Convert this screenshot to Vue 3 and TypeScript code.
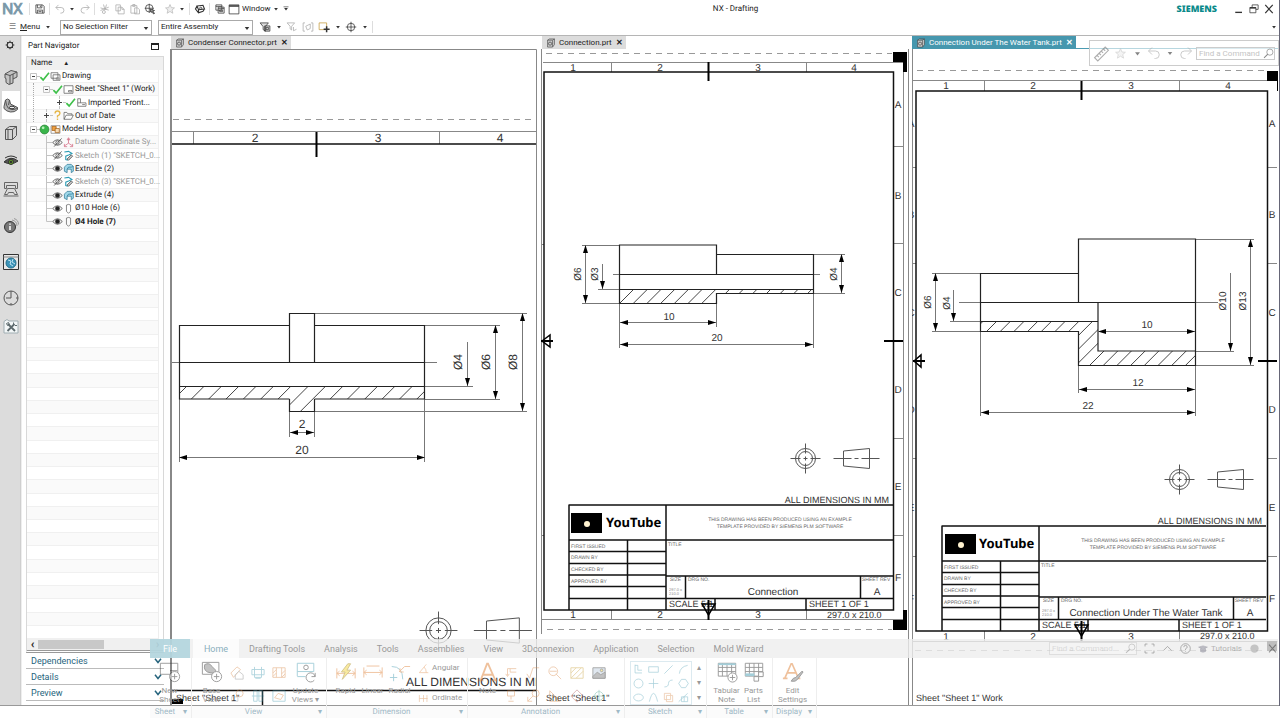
<script setup lang="ts">
interface TreeRow { level: number; toggle: '' | 'plus' | 'minus' | 'leaf' | 'last'; a: string; b: string; label: string; dim?: boolean; bold?: boolean; guide?: boolean }
interface Dim { x1: number; y1: number; x2: number; y2: number; text: string; tx: number; ty: number; single?: boolean }
interface Part { id: string; thin: string; bold: string; hatch: string; c0: number; pitch: number; count: number; top: number; bottom: number; dims: Dim[] }
interface Label { t: string; x: number; y: number }
interface Block { x: number; y: number; name: string; logo: number; word: number }

const arrowDown = '<path d="M5 6.500h6l-3 4z" fill="#333" stroke="none"/>'
const icons: Record<string, string> = {
  save: '<path d="M2.500 2.500h9l2 2v9h-11zM4.500 2.500v4h6v-4M4.500 13.500v-4h7v4M6 11.500h4M8.500 3.500v2"/>',
  undo: '<path d="M6 2.500L2.500 6 6 9.500M2.500 6h7a3.500 3.500 0 0 1 0 7.500h-1" stroke="#aaa"/>',
  redo: '<path d="M10 2.500L13.500 6 10 9.500M13.500 6h-7a3.500 3.500 0 0 0 0 7.500h1" stroke="#aaa"/>',
  cut: '<path d="M2 6.500l11 3M2 10l11-4.500M6 2l2 7M10 2l-2 7" stroke="#aaa"/><circle cx="6.500" cy="12" r="2" stroke="#aaa"/>',
  copy: '<path d="M2.500 2.500h6v8h-6zM5.500 5.500h5l3 3v6h-8zM10.500 5.500v3h3" stroke="#aaa" fill="#fff"/>',
  paste: '<path d="M2.500 3.500h8v10h-8zM5 2h3v2.500H5zM7.500 6.500h4l2.500 2.500v5.500H7.500z" stroke="#aaa" fill="#fff"/>',
  target: '<circle cx="7" cy="7" r="5"/><path d="M7 1v12M1 7h12M8 8l6 2-2 1 2 3-1.500.5-1.500-3-1.500 1z" fill="#999"/>',
  star: '<path d="M8 2l1.800 4.200 4.200.3-3.300 2.800 1.100 4.400L8 11.300l-3.800 2.400 1.100-4.400L2 6.500l4.200-.3z" stroke="#bbb" fill="#eee"/>',
  arrow: arrowDown,
  arrowbar: '<path d="M4 4.500h8"/>' + arrowDown,
  cube: '<path d="M4 4l8-1 2 5-8 1zM4 4L2 8l4 5 6-2 2-3M6 9v4" stroke-width="1.500"/><circle cx="9" cy="7" r="1.500"/>',
  layers: '<path d="M2.500 2.500h8v7h-8zM2.500 4.500h8M5.500 5.500h8v8h-8zM5.500 7.500h8M7.500 9.500h4v2h-4z" fill="#fff"/>',
  window: '<path d="M1.500 2.500h13v12h-13z"/><path d="M1.500 4h13" stroke-width="2"/>',
  filter: '<path d="M1.500 2.500h11l-4 5v6l-3-2v-4zM7.500 6.500h7v7h-7zM9.500 8.500h3v3h-3z" fill="#ddd"/>',
  filter2: '<path d="M1.500 2.500h10l-4 4.500v5l-2-1.500V7zM10 8v5l4-2" stroke="#aaa"/>',
  brackets: '<path d="M4 2.500H1.500v11H4M12 2.500h2.500v11H12M5 7l6-3v6l-4 2z" stroke="#aaa"/>',
  boxplus: '<path d="M1.500 2.500h10v9h-10z" stroke="#c49a3a"/><path d="M11.500 7v8M7.500 11h8" stroke-width="2"/>',
  cross: '<circle cx="8" cy="8" r="5"/><path d="M8 1v14M1 8h14"/>',
  part: '<path d="M2.500 3.500h8l3-2v9l-3 4h-8zM10.500 4v10M2.500 3.500l3-2h8" fill="#ccc" stroke="#444"/><circle cx="6.500" cy="9" r="2.500"/>',
  gear: '<circle cx="8" cy="8" r="4.500" stroke-width="1.800"/><path d="M8 1v3M8 12v3M1 8h3M12 8h3M3 3l2 2M11 11l2 2M3 13l2-2M11 5l2-2" stroke-width="1.500"/>',
  asm: '<path d="M2 5l6-3.500 6 1.500v5l-4 2v4l-4 1.500-3-2V9.500L2 9zM2 5l5 1.500v8.500M7 6.500l7-3.500M10 10V5" fill="#c4c4c4" stroke="#555"/>',
  nav: '<path d="M2.500 3q2-2 4 0l1 4 7 3.500v2q-3 3-7 2.500T1 11.500v-2z" fill="#b4b4b4" stroke="#555"/><path d="M2.500 3l1 5q1 4 5 4.500t6-2M6.500 3l-1 5" stroke="#555"/><ellipse cx="9" cy="10.500" rx="2.500" ry="1.300" fill="#eee"/>',
  reuse: '<path d="M2.500 4.500l4-3h7v9l-4 4h-7zM2.500 4.500h7v10M9.500 4.500l4-3M5 4.500v10" fill="#d4d4d4" stroke="#555"/>',
  eyecol: '<path d="M1 9q7-7 14-1-7 5-14 1z" fill="#555"/><circle cx="8" cy="9" r="2.500" fill="#6fb62c"/><circle cx="8" cy="9" r="1" fill="#111"/><path d="M2 5q6-4 12 0"/>',
  machine: '<path d="M1.500 1.500h13v6h-2v-3h-9v3h-2zM4.500 7.500l-3 6h3l1-2h5l1 2h3l-3-6zM.5 15h15" stroke="#666"/>',
  info: '<circle cx="7" cy="9" r="5.500" fill="#777"/><path d="M7 8v4M7 5.500v1.200" stroke="#fff" stroke-width="1.500"/><path d="M9 2q5 1 5 6M11 .5q4.500 1.500 4.500 6" stroke="#999"/>',
  web: '<path d="M.5.500h15v15H.5z" fill="#e8e8e8"/><path d="M.5 3h15" stroke="#888"/><circle cx="8" cy="9" r="5" fill="#3c93b8" stroke="#23708d"/><path d="M5 6l3 1-1 3 3 2M10 5l-1 3 3 2" stroke="#bfe3f0"/>',
  clock: '<circle cx="8" cy="8" r="7" stroke="#555"/><path d="M8 1v7H3M8 13v2M13 8h2" stroke="#555"/>',
  tools: '<path d="M1 3.500l3-2 2 1.500h9v12H1z" fill="#f3f7f8" stroke="#a0aeb3"/><path d="M5 6l7 7M11.500 6L4.500 13" stroke="#5d6a6e" stroke-width="1.800"/><path d="M3.500 5.500l2-1 1 2-2 1zM10.500 6.500v-2M12 7.500h2" stroke="#5d6a6e"/>',
  check: '<path d="M2 9l4 4L14.500 2.500" stroke="#3fc04a" stroke-width="2.400"/>',
  sheets: '<path d="M1.500 2.500h10v8h-10zM4.500 5.500h10v8h-10z" fill="#fff" stroke="#555"/><path d="M9 10h4v2H9z" stroke="#777"/>',
  sheet: '<path d="M1.500 2.500h13v11h-13zM8 9.500h5v2H8z" fill="#fff" stroke="#555"/>',
  imported: '<path d="M2.500 2.500h4v6h8v5h-12zM2.500 8.500h4M9 11h4" stroke="#555"/>',
  question: '<path d="M4.500 5q0-3.500 3.500-3.500T11.500 5Q11.500 7 8 8.500v2.500M8 12.500v2" stroke="#e6b84b" stroke-width="2"/>',
  folder: '<path d="M1.500 13.500v-10h4l1.500 2h6v2M1.500 13.500l3-6h10.500l-3 6z" fill="#fff" stroke="#555"/>',
  ball: '<circle cx="8" cy="8" r="6.500" fill="#39b54a" stroke="#2a7f36"/><circle cx="6" cy="5.500" r="2" fill="#b7efb9" stroke="none"/>',
  history: '<path d="M1.500 2.500h13v11h-13z" stroke="#777"/><path d="M3 3.500h6v6H3z" fill="#f0a040" stroke="#a05a10"/><path d="M7.500 6.500h6v6h-6z" fill="#f7d9b0" stroke="#a05a10"/>',
  eye: '<path d="M1 8q7-8 14 0-7 8-14 0z" stroke="#333"/><circle cx="8" cy="8" r="3" fill="#222"/>',
  eyeoff: '<path d="M1 8q7-8 14 0-7 8-14 0zM3 14L14 2" stroke="#333"/><circle cx="8" cy="8" r="2.500"/>',
  datum: '<path d="M8 2v7M8 9l-6 4M8 9l6 4M6 4l2-3 2 3zM2 10v4h4M14 10v4h-4" stroke="#d0607a"/>',
  sketch: '<path d="M2 3l6-1 5 3-4 2-5 2v5l3 1" stroke="#2d9db5" stroke-width="1.600"/><path d="M6 13l6-6 2 2-6 6z" fill="#ccc"/>',
  extrude: '<path d="M2 6l4-4h6l3 3v7l-3 2V9H6v5l-4-2z" fill="#9fd8ea" stroke="#23708d"/><path d="M6 9l2-3h4l3-1" stroke="#23708d"/>',
  hole: '<path d="M5 3v9l3 3 3-3V3q-3-2-6 0z" stroke="#555"/>',
  min: '<path d="M3 12.500h9" stroke-width="1.800"/>',
  restore: '<path d="M5.500 5.500v-3h8v6h-3M2.500 6h8v7h-8z"/><path d="M2.500 6.500h8" stroke-width="2"/>',
  close: '<path d="M3 2.500l10 11M13 2.500l-10 11" stroke-width="1.600"/>',
  ruler: '<path d="M1.500 12L11.500 2l3 3L4.500 15zM4 10l1.500 1.500M6 8l1.500 1.500M8 6l1.500 1.500M10 4l1.500 1.500" stroke="#777"/>',
  search: '<circle cx="10" cy="6" r="4.500"/><path d="M7 9l-5.500 5.500" stroke-width="1.500"/>',
  full: '<path d="M1.500 5V1.500H5M11 1.500h3.500V5M14.500 11v3.500H11M5 14.500H1.500V11"/>',
  up: '<path d="M2 11l6-6 6 6"/>',
  help: '<circle cx="8" cy="8" r="7"/><path d="M5.500 6q0-2.500 2.500-2.500T10.500 6Q10.500 7.500 8 8.500v1.500M8 11.500v1"/>',
  cap: '<path d="M1 5l7-2 7 2-7 3zM4 7v5q4 2 8 0V7" fill="#889" stroke="#667"/>',
  dot: '<circle cx="8" cy="8" r="6" fill="#999" stroke="none"/>',
  newsheet: '<path d="M1.500 2.500h19v12h-19zM12 10.500h8"/><circle cx="17" cy="17" r="5.500" fill="#fff"/><path d="M17 14v6M14 17h6"/>',
  baseview: '<path d="M1.500 1.500h18v13h-18z"/><path d="M4 4q5-3 8 2l4 4q0 4-5 3Q2 12 4 4z" fill="#888"/><circle cx="17" cy="17" r="5.500" fill="#fff"/><path d="M17 14v6M14 17h6"/>',
  update: '<path d="M2.500 2.500h18v9h-18zM2.500 16.500v-5M2.500 17h9" stroke="#4a9fb5"/><circle cx="12" cy="7" r="2.500"/><path d="M22 13v4h-4M22 17a5 5 0 1 0-1 4"/>',
  rapid: '<path d="M2 8v11M22 8v11M2 13.500h20M5 11l-3 2.500L5 16M19 11l3 2.500-3 2.500" stroke="#e0843c"/><path d="M14 3l-7 9h4l-3 8 9-10h-4l4-7z" fill="#f5d742" stroke="#a98b20"/>',
  linear: '<path d="M2 7v11M22 7v11M2 12.500h20M5 10l-3 2.500L5 15M19 10l3 2.500-3 2.500M5 5.500h14" stroke="#e0843c"/>',
  radial: '<path d="M3 6q12 0 12 14" stroke="#4a9fb5"/><path d="M11 12l6-6h6M12 8v4h4" stroke="#e0843c"/><path d="M5 14v8M1 18h8" stroke="#4a9fb5"/>',
  note: '<path d="M4 21L11 3h1l8 18M7 15h10M2 21h5M17 21h5" stroke="#e0843c" stroke-width="2"/>',
  edit: '<path d="M3 19L10 3h1l7 16M6 13h9M1 19h5M14 19h6" stroke="#e0843c" stroke-width="1.800"/><path d="M22 11l-7 7q-3 0-5 4 5 1 7-2l6-8z" fill="#888"/>',
  table: '<path d="M2.500 2.500h19v14h-19zM2.500 7h19M2.500 11.500h19M7 2.500v14M12 2.500v14M17 2.500v14"/><path d="M2.500 3.500h19" stroke="#4a9fb5" stroke-width="2"/><circle cx="18" cy="18" r="5" fill="#fff"/><path d="M18 15v6M15 18h6"/>',
  parts: '<path d="M2.500 2.500h19v14h-19zM2.500 7h19M2.500 11.500h19M7 2.500v14M12 2.500v14M17 2.500v14"/><path d="M2.500 15h10" stroke="#4a9fb5" stroke-width="3"/><path d="M12 17h5v5h-5zM17 12h5v5h-5z" fill="#fff"/>',
  v1: '<path d="M1 8l7-7 4 3-8 9z" stroke="#d98a4a"/><path d="M6 10l4-4 5 4v5H6z" stroke="#888"/>',
  v2: '<path d="M1 4h14v6H1zM4 1v12h8V1M5 14h6" stroke="#4a9fb5"/>',
  v3: '<path d="M1 2h14v11H1zM5 2v11M11 2v11M1 8l4-4M1 12l4-4M11 9l4-4M11 13l4-4" stroke="#d98a4a"/>',
  v4: '<path d="M2 9h7v5H2z" stroke="#999"/><circle cx="11" cy="5" r="4" stroke="#d98a4a"/>',
  v5: '<path d="M3 2h4v12H3zM9 2h4v12H9zM1 8h14" stroke="#4a9fb5"/>',
  v6: '<path d="M1 2h14v12H1z" stroke="#4a9fb5"/><path d="M3 10l4-5 6 2-3 5z" stroke="#d98a4a"/>',
  angular: '<path d="M2 14L12 2M2 14h13M9 6q3 3 3 8" stroke="#e0843c"/>',
  ordinate: '<path d="M2 3v10M2 8h12M8 3v10M13 3v10" stroke="#d98a4a"/>',
  a1: '<path d="M14 3H4v8M2 9l2 3 2-3M7 3v4h7" stroke="#d98a4a"/>',
  a2: '<path d="M1 9l3 5 4-12h7" stroke="#d98a4a"/>',
  a3: '<circle cx="6" cy="6" r="5" stroke="#d98a4a"/><path d="M2 6h8M9 9l6 6" stroke="#d98a4a"/>',
  a4: '<path d="M1 2h14v12H1zM1 8l6-6M1 14L13 2M7 14l8-8" stroke="#c9a23a"/>',
  a5: '<path d="M1 2h14v12H1z" fill="#bcd"/><path d="M1 12l5-5 4 3 5-3v7H1z" fill="#777"/><circle cx="11" cy="5" r="1.500" fill="#f5d742"/>',
  a6: '<path d="M4 2h8v6H4zM8 8v4M5 14h6" stroke="#d98a4a"/>',
  a7: '<circle cx="11" cy="5" r="4" stroke="#d98a4a"/><path d="M8 8l-6 6M2 9v5h5" stroke="#d98a4a"/>',
  a8: '<path d="M2 2v12h12zM5 7l6 6" stroke="#d98a4a"/>',
  a9: '<path d="M8 1l7 7-7 7-7-7z" stroke="#a55"/>',
  a10: '<circle cx="8" cy="8" r="5" stroke="#5a9"/><path d="M8 1v14M1 8h14" stroke="#5a9"/>',
  s1: '<path d="M3 1v12h10M3 2h4v7h6"/>', s2: '<path d="M1 4h14v8H1z"/>', s3: '<path d="M2 14L14 2"/>', s4: '<path d="M2 14Q3 4 14 2"/>',
  s5: '<circle cx="8" cy="8" r="6.500"/>', s6: '<path d="M8 1v14M1 8h14"/>', s7: '<path d="M2 13q6 0 6-5t6-5"/>', s8: '<path d="M5 2h6l4 6-4 6H5L1 8z"/>',
  s9: '<ellipse cx="8" cy="8" rx="7" ry="5"/>', s10: '<path d="M2 14Q8-10 14 14"/>', s11: '<path d="M2 2h9v3h3v9H5v-3H2zM5 5h6v6H5z" stroke="#d98a4a"/>', s12: '<path d="M1 14L14 2M5 7h9v7H5zM9 7v7"/>',
}

const quickA = ['cut', 'copy', 'paste', 'target']
const rail = [
  { i: 'asm', n: 'Assembly Navigator', c: '' }, { i: 'nav', n: 'Part Navigator', c: 'on' }, { i: 'reuse', n: 'Reuse Library', c: '' },
  { i: 'eyecol', n: 'View Manager', c: '' }, { i: 'machine', n: 'Machining', c: '' }, { i: 'info', n: 'Information', c: 'tall' },
  { i: 'web', n: 'Web Browser', c: 'tall' }, { i: 'clock', n: 'History', c: 'tall' }, { i: 'tools', n: 'Roles', c: 'short' },
]
const tree: TreeRow[] = [
  { level: 0, toggle: 'minus', a: 'check', b: 'sheets', label: 'Drawing' },
  { level: 1, toggle: 'minus', a: 'check', b: 'sheet', label: 'Sheet "Sheet 1" (Work)', guide: true },
  { level: 2, toggle: 'plus', a: 'check', b: 'imported', label: 'Imported "Front...', guide: true },
  { level: 1, toggle: 'plus', a: 'question', b: 'folder', label: 'Out of Date', guide: true },
  { level: 0, toggle: 'minus', a: 'ball', b: 'history', label: 'Model History' },
  { level: 1, toggle: 'leaf', a: 'eyeoff', b: 'datum', label: 'Datum Coordinate Sy...', dim: true },
  { level: 1, toggle: 'leaf', a: 'eyeoff', b: 'sketch', label: 'Sketch (1) "SKETCH_0...', dim: true },
  { level: 1, toggle: 'leaf', a: 'eye', b: 'extrude', label: 'Extrude (2)' },
  { level: 1, toggle: 'leaf', a: 'eyeoff', b: 'sketch', label: 'Sketch (3) "SKETCH_0...', dim: true },
  { level: 1, toggle: 'leaf', a: 'eye', b: 'extrude', label: 'Extrude (4)' },
  { level: 1, toggle: 'leaf', a: 'eye', b: 'hole', label: 'Ø10 Hole (6)' },
  { level: 1, toggle: 'last', a: 'eye', b: 'hole', label: 'Ø4 Hole (7)', bold: true },
]
const toggles: Record<string, string> = {
  plus: 'M6.500 0v3M6.500 10v3M10 6.500h3',
  minus: 'M3.500 3.500h6v6h-6zM10 6.500h3',
  leaf: 'M6.500 0v14M6.500 6.500h6', last: 'M6.500 0v6.500h6', '': '',
}
const marks: Record<string, string> = { plus: 'M4 6.500h5M6.500 4v5', minus: 'M5 6.500h3', leaf: '', last: '', '': '' }
const emptyRows = 43 - tree.length
const sections = ['Dependencies', 'Details', 'Preview']
const ribbonTabs = ['Drafting Tools', 'Analysis', 'Tools', 'Assemblies', 'View', '3Dconnexion', 'Application', 'Selection', 'Mold Wizard']
const viewIcons = ['v1', 'v2', 'v3', 'v4', 'v5', 'v6']
const noteIcons = ['a1', 'a2', 'a3', 'a4', 'a5', 'a6', 'a7', 'a8', 'a9', 'a10']
const sketchIcons = Array.from({ length: 12 }, (_, i) => `s${i + 1}`)

const condenser: Part = {
  id: 'condenser',
  bold: 'M289.500 325.500H179.500V399H289.500M314.500 325.500H424.500V399H314.500M289.500 362V313.500H314.500V362M179.500 386.500H424.500M289.500 399V411.500H314.500V399M179.500 362.500H424.500',
  thin: 'M172 362.500H437M314 313.500H527M424 325.500H500M424 386.500H473M424 399.500H500M314 411.500H527M179.500 399V462M424.500 399V462M289.500 411V437M314.500 411V437',
  hatch: '179.500,386.500 424.500,386.500 424.500,399 314.500,399 314.500,411.500 289.500,411.500 289.500,399 179.500,399',
  c0: 573, pitch: 17.35, count: 16, top: 380, bottom: 415,
  dims: [
    { x1: 179, y1: 457.5, x2: 425, y2: 457.5, text: '20', tx: 302, ty: 454 },
    { x1: 290, y1: 432.5, x2: 314, y2: 432.5, text: '2', tx: 302, ty: 428 },
    { x1: 467.5, y1: 342, x2: 467.5, y2: 386, text: 'Ø4', tx: 462, ty: 362, single: true },
    { x1: 495.5, y1: 325, x2: 495.5, y2: 399, text: 'Ø6', tx: 490, ty: 362 },
    { x1: 522.5, y1: 313, x2: 522.5, y2: 411, text: 'Ø8', tx: 517, ty: 362 },
  ],
}
const connection: Part = {
  id: 'connection',
  bold: 'M716.500 274V245H619.500V303.500H716.500V293.500H813.500V254.500H716.500M619.500 274.500H813.500M619.500 289.500H813.500',
  thin: 'M613 274.500H820M582 245.500H619M582 303.500H619M598 289.500H619M813 254.500H845M813 293.500H845M619.500 303V348M716.500 303V327M813.500 293V348',
  hatch: '619.500,289.500 813.500,289.500 813.500,293.500 716.500,293.500 716.500,303.500 619.500,303.500',
  c0: 923, pitch: 13.7, count: 16, top: 285, bottom: 308,
  dims: [
    { x1: 585.5, y1: 245, x2: 585.5, y2: 303, text: 'Ø6', tx: 581, ty: 274 },
    { x1: 602.5, y1: 264, x2: 602.5, y2: 289, text: 'Ø3', tx: 598, ty: 274, single: true },
    { x1: 841.5, y1: 254, x2: 841.5, y2: 293, text: 'Ø4', tx: 837, ty: 274 },
    { x1: 620, y1: 322.5, x2: 716, y2: 322.5, text: '10', tx: 669, ty: 320 },
    { x1: 620, y1: 344.5, x2: 813, y2: 344.5, text: '20', tx: 717, ty: 341 },
  ],
}
const tank: Part = {
  id: 'tank',
  bold: 'M1078.500 273.500H980.500V331.500H1078.500V365.500H1195.500V239H1078.500V302M980.500 321.500H1098V351H1195.500M1098 351V302.500M980.500 302.500H1195.500',
  thin: 'M959 302.500H1218M932 273.500H980M932 331.500H980M950 321.500H980M1195 239.500H1254M1195 351.500H1234M1195 365.500H1254M980.500 331V416M1078.500 365V393M1195.500 365V416',
  hatch: '980.500,321.500 1098,321.500 1098,351 1195.500,351 1195.500,365.500 1078.500,365.500 1078.500,331.500 980.500,331.500',
  c0: 1318, pitch: 13.7, count: 20, top: 318, bottom: 369,
  dims: [
    { x1: 935.5, y1: 273, x2: 935.5, y2: 331, text: 'Ø6', tx: 931, ty: 302 },
    { x1: 953.5, y1: 290, x2: 953.5, y2: 321, text: 'Ø4', tx: 950, ty: 303, single: true },
    { x1: 1230.5, y1: 273, x2: 1230.5, y2: 351, text: 'Ø10', tx: 1226, ty: 301, single: true },
    { x1: 1250.5, y1: 239, x2: 1250.5, y2: 365, text: 'Ø13', tx: 1246, ty: 301 },
    { x1: 1098, y1: 331.5, x2: 1195, y2: 331.5, text: '10', tx: 1147, ty: 328 },
    { x1: 1079, y1: 389.5, x2: 1195, y2: 389.5, text: '12', tx: 1138, ty: 386 },
    { x1: 981, y1: 412.5, x2: 1195, y2: 412.5, text: '22', tx: 1088, ty: 409 },
  ],
}

function isVertical(d: Dim): boolean { return d.x1 === d.x2 }
function tip(x: number, y: number, dx: number, dy: number): string {
  return `M${x} ${y}L${x + dx * 8 + dy * 2.5} ${y + dy * 8 + dx * 2.5}L${x + dx * 8 - dy * 2.5} ${y + dy * 8 - dx * 2.5}Z`
}
function tips(d: Dim): string {
  if (isVertical(d)) return (d.single ? '' : tip(d.x1, d.y1, 0, 1)) + tip(d.x2, d.y2, 0, -1)
  return tip(d.x1, d.y1, 1, 0) + tip(d.x2, d.y2, -1, 0)
}
function hatching(p: Part): string {
  return Array.from({ length: p.count + 2 }, (_, k) => {
    const c = p.c0 + (k - 1) * p.pitch
    return `M${c - p.top} ${p.top}L${c - p.bottom} ${p.bottom}`
  }).join('')
}
const blockLines = 'M569 505H893M569 540H893M569 551.500H666M569 563.500H666M569 575H666M569 586.500H666M569 598.500H893M666 576H893M569 504.500V610M666 505V610M627.500 540V610M685.500 576V598M860.500 576V598M715 598V610M806 598V610'
const small: Label[] = [
  { t: 'FIRST ISSUED', x: 571, y: 548 }, { t: 'DRAWN BY', x: 571, y: 559 }, { t: 'CHECKED BY', x: 571, y: 571 }, { t: 'APPROVED BY', x: 571, y: 583 },
  { t: 'TITLE', x: 668, y: 546 }, { t: 'SIZE', x: 670, y: 581 }, { t: 'DRG NO.', x: 688, y: 581 }, { t: 'SHEET REV', x: 862, y: 581 },
]
const sheets: { part: Part; vb: string; frame: string; heavy: string; grid: string; tris: string; corner: string; dash: string; labels: Label[]; block: Block; sym: [number, number]; cls: string }[] = [
  {
    part: connection, vb: '541 49 371 656', cls: 'mid',
    frame: 'M544 72H893.500V610H544Z',
    heavy: 'M708.500 62V81M884 341H903M541 341H553M708.500 600V620',
    grid: 'M543 62.500H903.500V619.500H541.500M541.500 49V634M908.500 49V705M611.500 62V72M806.500 62V72M611.500 610V620M806.500 610V620M893 146.500h10M893 243.500h10M893 438.500h10M893 535.500h10M541 244.500h3M541 535.500h3',
    tris: 'M542 341L550 335V347ZM702 604H715L708.500 615Z',
    corner: 'M893 52H907V72H903V62H893ZM893 620H903V610H907V630H893Z',
    dash: 'M546 53.500H892M547 629.500H892',
    labels: [
      { t: '1', x: 573, y: 71 }, { t: '2', x: 660, y: 71 }, { t: '3', x: 758, y: 71 }, { t: '4', x: 854, y: 71 },
      { t: '1', x: 573, y: 618 }, { t: '2', x: 660, y: 618 }, { t: '3', x: 758, y: 618 },
      { t: 'A', x: 898, y: 108 }, { t: 'B', x: 898, y: 199 }, { t: 'C', x: 898, y: 296 }, { t: 'D', x: 898, y: 393 }, { t: 'E', x: 898, y: 490 }, { t: 'F', x: 898, y: 581 },
    ],
    block: { x: 0, y: 0, name: 'Connection', logo: 571, word: 606 }, sym: [805.5, 458.5],
  },
  {
    part: tank, vb: '912 49 368 656', cls: 'right',
    frame: 'M916 91H1267.500V631H916Z',
    heavy: 'M1081.500 81V100M1258 361H1277M913 361H925M1081.500 621V641',
    grid: 'M913 80.500H1277.500M912.500 641.500H1277.500M912.500 49V705M984.500 80V91M1179.500 80V91M984.500 631V641M1179.500 631V641M1267 167.500h10M1267 263.500h10M1267 458.500h10M1267 556.500h10M912 167.500h4M912 263.500h4M912 458.500h4M912 556.500h4',
    tris: 'M914 361L921 355V367ZM1075 625H1088L1081.500 636Z',
    corner: 'M1267 71H1278V91H1277V81H1267ZM1267 641H1277V651H1267Z',
    dash: 'M917 70.500H1266M915 650.500H1266',
    labels: [
      { t: '1', x: 946, y: 89 }, { t: '2', x: 1033, y: 89 }, { t: '3', x: 1131, y: 89 }, { t: '4', x: 1228, y: 89 },
      { t: '1', x: 946, y: 640 }, { t: '2', x: 1033, y: 640 }, { t: '3', x: 1131, y: 640 },
      { t: 'A', x: 1272, y: 127 }, { t: 'B', x: 1272, y: 218 }, { t: 'C', x: 1272, y: 316 }, { t: 'D', x: 1272, y: 413 }, { t: 'E', x: 1272, y: 511 }, { t: 'F', x: 1272, y: 602 },
      { t: 'A', x: 911, y: 127 }, { t: 'B', x: 911, y: 218 }, { t: 'C', x: 911, y: 316 }, { t: 'D', x: 911, y: 413 }, { t: 'E', x: 911, y: 511 }, { t: 'F', x: 911, y: 602 },
    ],
    block: { x: 373, y: 21, name: 'Connection Under The Water Tank', logo: 572, word: 606 }, sym: [1179.5, 479.5],
  },
]
</script>

<template>
  <div class="app">
    <header class="top">
      <div class="bar first">
        <span class="nx">NX</span><i class="sep" />
        <button class="ic" aria-label="Save"><svg viewBox="0 0 16 16" v-html="icons.save" /></button><i class="sep" />
        <button class="ic" aria-label="Undo"><svg viewBox="0 0 16 16" v-html="icons.undo" /></button>
        <button class="ic thin" aria-label="Undo list"><svg viewBox="0 0 16 16" v-html="icons.arrow" /></button>
        <button class="ic" aria-label="Redo"><svg viewBox="0 0 16 16" v-html="icons.redo" /></button><i class="sep" />
        <button v-for="q in quickA" :key="q" class="ic" :aria-label="q"><svg viewBox="0 0 16 16" v-html="icons[q]" /></button><i class="sep plain" />
        <button class="ic" aria-label="Favorites"><svg viewBox="0 0 16 16" v-html="icons.star" /></button>
        <button class="ic thin" aria-label="Favorites list"><svg viewBox="0 0 16 16" v-html="icons.arrow" /></button><i class="sep" />
        <button class="ic" aria-label="Touch mode"><svg viewBox="0 0 16 16" v-html="icons.cube" /></button><i class="sep" />
        <button class="ic" aria-label="Switch window"><svg viewBox="0 0 16 16" v-html="icons.layers" /></button>
        <button class="ic word" aria-label="Window"><svg viewBox="0 0 16 16" v-html="icons.window" />Window</button>
        <button class="ic thin" aria-label="Window list"><svg viewBox="0 0 16 16" v-html="icons.arrow" /></button>
        <button class="ic thin" aria-label="Customize"><svg viewBox="0 0 16 16" v-html="icons.arrowbar" /></button>
        <h1 class="title">NX - Drafting</h1>
        <strong class="brand">SIEMENS</strong>
        <button v-for="w in ['min', 'restore', 'close']" :key="w" class="ic" :aria-label="w"><svg viewBox="0 0 16 16" v-html="icons[w]" /></button>
      </div>
      <div class="bar second">
        <button class="menu"><span class="burger">☰</span><span><u>M</u>enu</span><svg class="tiny" viewBox="0 0 16 16" v-html="icons.arrow" /></button>
        <label class="pick"><select aria-label="Selection filter"><option>No Selection Filter</option></select><svg viewBox="0 0 16 16" v-html="icons.arrow" /></label>
        <label class="pick"><select aria-label="Selection scope"><option>Entire Assembly</option></select><svg viewBox="0 0 16 16" v-html="icons.arrow" /></label>
        <button class="ic" aria-label="Filter"><svg viewBox="0 0 16 16" v-html="icons.filter" /></button>
        <button class="ic thin" aria-label="Filter list"><svg viewBox="0 0 16 16" v-html="icons.arrow" /></button>
        <button class="ic" aria-label="Reset filters"><svg viewBox="0 0 16 16" v-html="icons.filter2" /></button>
        <button class="ic" aria-label="Deselect"><svg viewBox="0 0 16 16" v-html="icons.brackets" /></button>
        <button class="ic" aria-label="Add"><svg viewBox="0 0 16 16" v-html="icons.boxplus" /></button>
        <button class="ic thin" aria-label="Add list"><svg viewBox="0 0 16 16" v-html="icons.arrow" /></button>
        <button class="ic" aria-label="Snap"><svg viewBox="0 0 16 16" v-html="icons.cross" /></button>
        <button class="ic thin" aria-label="Snap list"><svg viewBox="0 0 16 16" v-html="icons.arrow" /></button><i class="sep" />
        <button class="ic thin end" aria-label="More"><svg viewBox="0 0 16 16" v-html="icons.arrow" /></button>
      </div>
    </header>

    <main class="main">
      <nav class="rail">
        <button class="gear" aria-label="Settings"><svg viewBox="0 0 16 16" v-html="icons.gear" /></button>
        <button v-for="r in rail" :key="r.n" :class="r.c" :aria-label="r.n"><svg viewBox="0 0 16 16" v-html="icons[r.i]" /></button>
      </nav>
      <aside class="nav">
        <div class="navtitle"><h2>Part Navigator</h2><button class="maxi" aria-label="Maximize" /></div>
        <div class="box">
          <div class="colhead">Name <span>▲</span></div>
          <ul class="tree">
            <li v-for="r in tree" :key="r.label" :class="{ dim: r.dim, bold: r.bold }">
              <i v-for="n in r.level" :key="n" class="indent" :class="{ line: r.guide }" />
              <svg class="tog" viewBox="0 0 13 13"><path class="dots" :d="toggles[r.toggle]" /><path class="mark" :d="marks[r.toggle]" /></svg>
              <svg class="ti" viewBox="0 0 16 16" v-html="icons[r.a]" />
              <svg class="ti" viewBox="0 0 16 16" v-html="icons[r.b]" />
              <span>{{ r.label }}</span>
            </li>
            <li v-for="n in emptyRows" :key="n" />
          </ul>
          <div class="hscroll"><span>‹</span><i /><span>›</span></div>
        </div>
        <button v-for="s in sections" :key="s" class="section">{{ s }}<svg viewBox="0 0 10 8"><path d="M1 1l4 5 4-5" /></svg></button>
      </aside>

      <section class="views">
        <article class="view left">
          <div class="tabs"><button class="tab"><svg viewBox="0 0 16 16" v-html="icons.part" />Condenser Connector.prt<b>✕</b></button></div>
          <svg class="canvas" viewBox="170 49 371 656" preserveAspectRatio="xMinYMin meet">
            <path class="edge" d="M171 49V705" />
            <path class="grid" d="M172 49.500H536.500V705M541.500 49V705M172 131.500H536M193.500 132V144M439.500 132V144" />
            <path class="dash" d="M173 119.500H536" />
            <path class="frame" d="M172 144H536M172 690.500H536M262.500 690V705" />
            <path class="heavy" d="M316.500 132V157" />
            <path class="solid" d="M172 699H183V704H172Z" />
            <g class="mid12"><text x="255" y="142">2</text><text x="378" y="142">3</text><text x="500" y="142">4</text></g>
            <clipPath id="leftsheet"><path d="M172 49H536V705H172Z" /></clipPath>
            <text class="t12" x="406" y="686" clip-path="url(#leftsheet)">ALL DIMENSIONS IN MM</text>
            <g class="sym" transform="translate(438.500 630.500) scale(1.263)">
              <circle r="10" /><circle r="7" /><path d="M-15 0H-5M-2 0H2M5 0H15M0-15V-5M0-2V2M0 5V15M38-7.500L64-10V10L38 7.500ZM28 0H46M49 0H53M56 0H74" />
            </g>
            <g>
              <clipPath id="clip-condenser"><polygon :points="condenser.hatch" /></clipPath>
              <path class="hatch" clip-path="url(#clip-condenser)" :d="hatching(condenser)" />
              <path class="thin" :d="condenser.thin" /><path class="outline" :d="condenser.bold" />
              <g v-for="d in condenser.dims" :key="d.text">
                <line class="thin" :x1="d.x1" :y1="d.y1" :x2="d.x2" :y2="d.y2" /><path class="solid" :d="tips(d)" />
                <text class="mid12" :x="d.tx" :y="d.ty" :transform="isVertical(d) ? `rotate(-90 ${d.tx} ${d.ty})` : undefined">{{ d.text }}</text>
              </g>
            </g>
            <text class="status" x="176" y="701">Sheet "Sheet 1"</text>
          </svg>
        </article>

        <article v-for="s in sheets" :key="s.cls" class="view" :class="s.cls">
          <div class="tabs"><button class="tab"><svg viewBox="0 0 16 16" v-html="icons.part" />{{ s.block.name }}.prt<b>✕</b></button></div>
          <svg class="canvas" :viewBox="s.vb" preserveAspectRatio="xMinYMin meet">
            <path class="grid" :d="s.grid" /><path class="dash" :d="s.dash" />
            <path class="frame" :d="s.frame" /><path class="solid" :d="s.corner" />
            <g class="mid10"><text v-for="(l, k) in s.labels" :key="k" :x="l.x" :y="l.y">{{ l.t }}</text></g>
            <g class="sym" :transform="`translate(${s.sym[0]} ${s.sym[1]})`">
              <circle r="10" /><circle r="7" /><path d="M-15 0H-5M-2 0H2M5 0H15M0-15V-5M0-2V2M0 5V15M38-7.500L64-10V10L38 7.500ZM28 0H46M49 0H53M56 0H74" />
            </g>
            <g :transform="`translate(${s.block.x} ${s.block.y})`">
              <path class="frame" :d="blockLines" />
              <rect class="solid" :x="s.block.logo" y="513" width="31" height="20" /><circle class="moon" :cx="s.block.logo + 16" cy="524" r="3" />
              <text class="yt" :x="s.block.word" y="527">YouTube</text>
              <text class="t9" x="889" y="503" text-anchor="end">ALL DIMENSIONS IN MM</text>
              <g class="t5"><text v-for="l in small" :key="l.t" :x="l.x" :y="l.y">{{ l.t }}</text></g>
              <g class="t5 center"><text x="780" y="521">THIS DRAWING HAS BEEN PRODUCED USING AN EXAMPLE</text><text x="780" y="528">TEMPLATE PROVIDED BY SIEMENS PLM SOFTWARE</text></g>
              <g class="stamp"><text x="669" y="591">297.0 x</text><text x="669" y="595">210.0</text></g>
              <text class="mid10" x="773" y="595">{{ s.block.name }}</text><text class="mid10" x="877" y="595">A</text>
              <text class="t9" x="669" y="607">SCALE 5:1</text><text class="t9" x="809" y="607">SHEET 1 OF 1</text><text class="t9" x="827" y="618">297.0 x 210.0</text>
            </g>
            <path class="heavy" :d="s.heavy" /><path class="tri" :d="s.tris" />
            <g>
              <clipPath :id="`clip-${s.part.id}`"><polygon :points="s.part.hatch" /></clipPath>
              <path class="hatch" :clip-path="`url(#clip-${s.part.id})`" :d="hatching(s.part)" />
              <path class="thin" :d="s.part.thin" /><path class="outline" :d="s.part.bold" />
              <g v-for="d in s.part.dims" :key="d.text">
                <line class="thin" :x1="d.x1" :y1="d.y1" :x2="d.x2" :y2="d.y2" /><path class="solid" :d="tips(d)" />
                <text class="mid10" :x="d.tx" :y="d.ty" :transform="isVertical(d) ? `rotate(-90 ${d.tx} ${d.ty})` : undefined">{{ d.text }}</text>
              </g>
            </g>
            <text v-if="s.cls === 'mid'" class="status" x="546" y="701">Sheet "Sheet 1"</text>
            <text v-else class="status" x="916" y="701">Sheet "Sheet 1" Work</text>
          </svg>
        </article>
      </section>
    </main>

    <div class="ghostbar">
      <svg class="g18" viewBox="0 0 16 16" v-html="icons.ruler" />
      <svg class="g14" viewBox="0 0 16 16" v-html="icons.star" /><svg class="g14" viewBox="0 0 16 16" v-html="icons.arrow" />
      <svg class="g16" viewBox="0 0 16 16" v-html="icons.undo" /><svg class="g12" viewBox="0 0 16 16" v-html="icons.arrow" />
      <svg class="g16" viewBox="0 0 16 16" v-html="icons.redo" />
      <label class="find"><input type="text" placeholder="Find a Command" aria-label="Find a Command"><svg viewBox="0 0 16 16" v-html="icons.search" /></label>
    </div>

    <div class="ribbon">
      <div class="rtabs">
        <button class="file">File</button><button class="home">Home</button>
        <button v-for="t in ribbonTabs" :key="t">{{ t }}</button>
        <div class="rend">
          <label class="find"><input type="text" placeholder="Find a Command" aria-label="Find a Command in ribbon"><svg viewBox="0 0 16 16" v-html="icons.search" /></label>
          <svg viewBox="0 0 16 16" v-html="icons.full" /><svg viewBox="0 0 16 16" v-html="icons.up" /><svg viewBox="0 0 16 16" v-html="icons.help" />
          <button class="tut"><svg viewBox="0 0 16 16" v-html="icons.cap" />Tutorials</button>
          <svg viewBox="0 0 16 16" v-html="icons.dot" /><svg viewBox="0 0 16 16" v-html="icons.close" />
        </div>
      </div>
      <div class="groups">
        <section class="grp g-sheet">
          <div class="body"><button class="big"><svg viewBox="0 0 24 24" v-html="icons.newsheet" />New<br>Sheet</button></div>
          <footer>Sheet<i>▾</i></footer>
        </section>
        <section class="grp g-view">
          <div class="body">
            <button class="big"><svg viewBox="0 0 24 24" v-html="icons.baseview" />Base<br>View</button>
            <div class="icons three"><button v-for="i in viewIcons" :key="i" :aria-label="i"><svg viewBox="0 0 16 16" v-html="icons[i]" /></button></div>
            <button class="big"><svg viewBox="0 0 24 24" v-html="icons.update" />Update<br>Views ▾</button>
          </div>
          <footer>View<i>▾</i></footer>
        </section>
        <section class="grp g-dim">
          <div class="body">
            <button class="big slim"><svg viewBox="0 0 24 24" v-html="icons.rapid" />Rapid</button>
            <button class="big slim"><svg viewBox="0 0 24 24" v-html="icons.linear" />Linear</button>
            <button class="big slim"><svg viewBox="0 0 24 24" v-html="icons.radial" />Radial</button>
            <div class="stack"><button><svg viewBox="0 0 16 16" v-html="icons.angular" />Angular</button><button><svg viewBox="0 0 16 16" v-html="icons.ordinate" />Ordinate</button></div>
          </div>
          <footer>Dimension<i>▾</i></footer>
        </section>
        <section class="grp g-ann">
          <div class="body">
            <button class="big"><svg viewBox="0 0 24 24" v-html="icons.note" />Note</button>
            <div class="icons five"><button v-for="i in noteIcons" :key="i" :aria-label="i"><svg viewBox="0 0 16 16" v-html="icons[i]" /></button></div>
          </div>
          <footer>Annotation<i>▾</i></footer>
        </section>
        <section class="grp g-sk">
          <div class="body">
            <div class="gallery"><button v-for="i in sketchIcons" :key="i" :aria-label="i"><svg viewBox="0 0 16 16" v-html="icons[i]" /></button></div>
            <div class="spin"><span>▴</span><span>▾</span><span>▾</span></div>
          </div>
          <footer>Sketch<i>▾</i></footer>
        </section>
        <section class="grp g-tab">
          <div class="body">
            <button class="big slim"><svg viewBox="0 0 24 24" v-html="icons.table" />Tabular<br>Note</button>
            <button class="big slim"><svg viewBox="0 0 24 24" v-html="icons.parts" />Parts<br>List</button>
          </div>
          <footer>Table<i>▾</i></footer>
        </section>
        <section class="grp g-dis">
          <div class="body"><button class="big"><svg viewBox="0 0 24 24" v-html="icons.edit" />Edit<br>Settings</button></div>
          <footer>Display<i>▾</i></footer>
        </section>
      </div>
    </div>
  </div>
</template>

<style>
body { margin: 0; background: #fff; }
</style>
<style scoped>
.app { position: relative; display: flex; flex-direction: column; min-height: 100vh; box-sizing: border-box; padding-bottom: 14px; overflow: hidden; background: #fff; color: #222; font: 8px/12px Roboto, "Noto Sans", sans-serif; text-rendering: geometricPrecision; }
.app::after { content: ""; position: absolute; top: 0; right: 0; bottom: 14px; width: 1px; background: #667; }
.app * { box-sizing: border-box; }
button { margin: 0; padding: 0; border: 0; background: none; font: inherit; color: inherit; }
svg { fill: none; stroke: #333; display: block; flex: none; }
.top { height: 36px; border-bottom: 1px solid #b5b5b5; }
.bar { display: flex; align-items: center; height: 18px; }
.first { padding-right: 4px; }
.nx { width: 27px; padding-left: 2px; font: 15px/18px "Noto Sans", sans-serif; color: #6f8d9f; -webkit-text-stroke: 1px #7d9aaa; }
.sep { width: 1px; height: 12px; margin: 0 2px; background: #ddd; }
.sep.plain { background: none; }
.ic { display: flex; align-items: center; justify-content: center; width: 15px; height: 16px; }
.ic svg { width: 12px; height: 12px; }
.ic.thin { width: 10px; }
.ic.thin svg { width: 10px; height: 10px; }
.ic.word { width: auto; gap: 2px; padding-left: 1px; font-size: 8px; }
.title { flex: 1; margin: 0; padding-left: 4px; text-align: center; font: inherit; font-size: 8px; }
.brand { margin-right: 14px; color: #0a8a8a; font: 900 9px/16px "Noto Sans", sans-serif; }
.second .ic { width: 16px; }
.second .ic.thin { width: 11px; }
.second .end { margin-left: auto; margin-right: 1px; }
.menu { display: flex; align-items: center; gap: 3px; width: 60px; padding-left: 7px; font-size: 8px; }
.burger { width: 10px; color: #777; font-size: 8px; }
.tiny { width: 10px; height: 10px; }
.pick { position: relative; display: block; width: 92px; height: 15px; margin-right: 6px; }
.pick + .pick { width: 95px; margin-right: 4px; }
.pick select { width: 100%; height: 15px; padding: 0 2px; border: 1px solid #aaa; border-radius: 0; background: #fff; appearance: none; font: inherit; color: #222; }
.pick svg { position: absolute; right: 0; top: 2px; width: 12px; height: 12px; }

.main { display: flex; flex: 1; border-bottom: 1px solid #999; }
.rail { display: flex; flex-direction: column; flex: none; width: 21px; background: #dcdcdc; border-right: 1px solid #cfcfcf; }
.rail button { display: flex; align-items: center; justify-content: flex-end; height: 28px; padding-right: 1px; }
.rail svg { width: 16px; height: 16px; }
.rail .gear { height: 18px; margin-bottom: 9px; justify-content: center; }
.rail .gear svg { width: 10px; height: 10px; }
.rail .on { margin-left: 2px; background: #fff; }
.rail .tall { height: 36px; }
.rail .tall:not(.tall ~ .tall) { margin-top: 5px; }
.rail .short { height: 20px; }
.nav { display: flex; flex-direction: column; flex: none; width: 149px; padding: 0 6px 4px 4px; border-left: 1px solid #eee; }
.navtitle { display: flex; align-items: center; justify-content: space-between; height: 20px; padding: 0 5px 0 2px; }
.navtitle h2 { margin: 0; font: inherit; }
.maxi { width: 8px; height: 7px; border: 1px solid #222; border-top-width: 2px; }
.box { display: flex; flex-direction: column; flex: 1; border: 1px solid #d8d8d8; border-bottom: 3px double #999; }
.colhead { height: 13px; padding-left: 4px; background: #f0f0f0; }
.colhead span { margin-left: 9px; font-size: 6px; }
.tree { display: flex; flex-direction: column; flex: 1; margin: 0 4px 0 0; padding: 0; list-style: none; border-right: 1px solid #eee; }
.tree li { display: flex; align-items: center; flex: 1; height: 0; border-bottom: 1px solid #f0f0f0; white-space: nowrap; }
.tree li:nth-child(even) { background: #fafafa; }
.tree .dim { color: #999; }
.tree .bold { font-weight: 700; }
.tree span { margin-left: 1px; }
.indent { flex: none; width: 13px; height: 100%; }
.indent.line:first-child { border-left: 1px dotted #aaa; margin-left: 6px; width: 7px; }
.tog { width: 13px; height: 13px; margin-right: -1px; }
.dots { stroke: #c4c4c4; }
.mark { stroke: #444; }
.ti { width: 11px; height: 11px; }
.hscroll { display: flex; align-items: center; height: 11px; background: #f0f0f0; font-size: 12px; font-weight: 700; }
.hscroll span { width: 11px; text-align: center; line-height: 9px; }
.hscroll i { width: 66px; height: 9px; margin-right: auto; background: #c8c8c8; }
.section { display: flex; align-items: center; justify-content: space-between; height: 16px; padding: 0 2px 0 5px; border-bottom: 1px solid #bbb; color: #27647d; font-size: 9px; }
.section svg { width: 8px; height: 6px; stroke: #27647d; stroke-width: 2; }

.views { display: grid; grid-template-columns: 371fr 371fr 368fr; flex: 1; min-width: 0; }
.view { display: flex; flex-direction: column; min-width: 0; }
.tabs { display: flex; height: 13px; }
.tab { display: flex; align-items: center; gap: 3px; height: 13px; padding: 0 3px 0 4px; background: #dcdcdc; white-space: nowrap; }
.tab svg { width: 10px; height: 10px; }
.tab b { margin-left: 1px; font-size: 8px; }
.left .tabs { padding-left: 1px; }
.mid .tabs { padding-left: 1px; }
.right .tabs { border-bottom: 1px solid #4b9bb2; }
.right .tab { background: #4697ae; color: #fff; }
.canvas { width: 100%; flex: 1 1 656px; height: auto; min-height: 0; font-family: "Liberation Sans", Arial, sans-serif; }
.canvas text { fill: #333; stroke: none; }
.grid { stroke: #888; }
.edge { stroke: #888; stroke-width: 2; }
.dash { stroke: #999; stroke-dasharray: 6 5; }
.frame { stroke: #111; stroke-width: 1.5px; }
.heavy { stroke: #000; stroke-width: 2px; }
.tri { stroke: #000; stroke-width: 1.5px; }
.outline { stroke: #222; stroke-width: 1.2px; }
.thin { stroke: #777; }
.hatch { stroke: #444; }
.solid { fill: #000; stroke: none; }
.moon { fill: #fff3d0; stroke: none; }
.sym { stroke: #555; stroke-width: 1; }
.sym * { vector-effect: non-scaling-stroke; }
.mid10, .mid12, .center { text-anchor: middle; }
.mid10 { font-size: 10px; }
.mid12, .t12 { font-size: 12px; }
.t9 { font-size: 9px; }
.t5 { font-size: 5px; }
.canvas .t5 text { fill: #666; }
.stamp { font-size: 4px; opacity: .6; }
.canvas .yt { font: 700 13px "Noto Sans", sans-serif; fill: #000; }
.status { font-size: 9px; }

.ghostbar { position: absolute; top: 40px; right: 1px; display: flex; align-items: center; gap: 2px; width: 190px; height: 26px; padding: 0 3px; border: 1px solid #ccc; background: rgba(255, 255, 255, .6); }
.ghostbar > svg { opacity: .6; }
.g18 { width: 17px; height: 17px; }
.g16 { width: 16px; height: 16px; }
.g12 { width: 12px; height: 12px; }
.g14 { width: 13px; height: 13px; margin-left: 2px; }
.find { position: relative; display: block; width: 79px; height: 13px; margin-left: auto; }
.find input { width: 100%; height: 13px; padding: 0 2px; border: 1px solid #ccc; background: rgba(255, 255, 255, .5); font: inherit; color: #999; }
.find input::placeholder { color: #c4c4c4; opacity: 1; }
.find svg { position: absolute; top: 1px; right: 1px; width: 11px; height: 11px; stroke: #888; }

.ribbon { position: absolute; left: 150px; right: 2px; bottom: 2px; color: #999; }
.rtabs { display: flex; align-items: center; height: 19px; background: rgba(238, 238, 238, .8); font-size: 9px; }
.rtabs > button { height: 19px; padding: 0 9px; margin-right: 1px; }
.rtabs .file { width: 40px; margin: 0; padding: 0; background: rgba(160, 205, 217, .7); color: #fff; }
.rtabs .home { width: 46px; margin: 0 1px 0 3px; padding: 0; background: rgba(255, 255, 255, .8); color: #8aafbd; }
.rend { display: flex; align-items: center; gap: 7px; margin-left: auto; opacity: .5; font-size: 8px; }
.rend > svg { width: 11px; height: 11px; }
.rend .find { width: 88px; }
.tut { display: flex; align-items: center; gap: 3px; color: #777; }
.tut svg { width: 10px; height: 10px; }
.groups { display: flex; }
.grp { display: flex; flex-direction: column; border-right: 1px solid #eee; }
.body { display: flex; align-items: flex-start; height: 48px; padding-top: 3px; }
.grp footer { position: relative; height: 12px; padding-right: 11px; background: rgba(245, 245, 245, .4); color: #9fb9c6; text-align: center; }
.grp footer i { position: absolute; right: 4px; font-style: normal; }
.big { width: 39px; line-height: 9px; text-align: center; }
.big svg { width: 22px; height: 22px; margin: 0 auto 3px; opacity: .5; }
.big.slim { width: 27px; }
.icons { display: grid; grid-auto-rows: 23px; }
.icons.three { grid-template-columns: repeat(3, 21px); margin-left: -5px; margin-right: -3px; }
.icons.five { grid-template-columns: repeat(5, 22px); margin-left: -7px; }
.icons svg { width: 14px; height: 14px; margin: 0 auto; opacity: .45; }
.gallery { display: grid; grid-template-columns: repeat(4, 15px); grid-auto-rows: 14px; width: 62px; margin-left: 5px; border: 1px solid #dceaf0; }
.gallery svg { width: 11px; height: 11px; margin: 0 auto; stroke: #4a9fb5; opacity: .5; }
.spin { display: flex; flex-direction: column; justify-content: space-around; width: 14px; height: 44px; text-align: center; }
.stack { display: flex; flex-direction: column; gap: 16px; margin-left: 5px; }
.stack button { display: flex; align-items: center; gap: 3px; height: 14px; }
.stack svg { width: 11px; height: 11px; opacity: .5; }
.g-sheet { width: 42px; }
.g-view { width: 135px; }
.g-dim { width: 141px; }
.g-dim .body { padding-left: 5px; }
.g-ann { width: 157px; }
.g-sk { width: 82px; }
.g-tab { width: 66px; }
.g-tab .body { padding-left: 6px; }
.g-dis { width: 44px; }
</style>
